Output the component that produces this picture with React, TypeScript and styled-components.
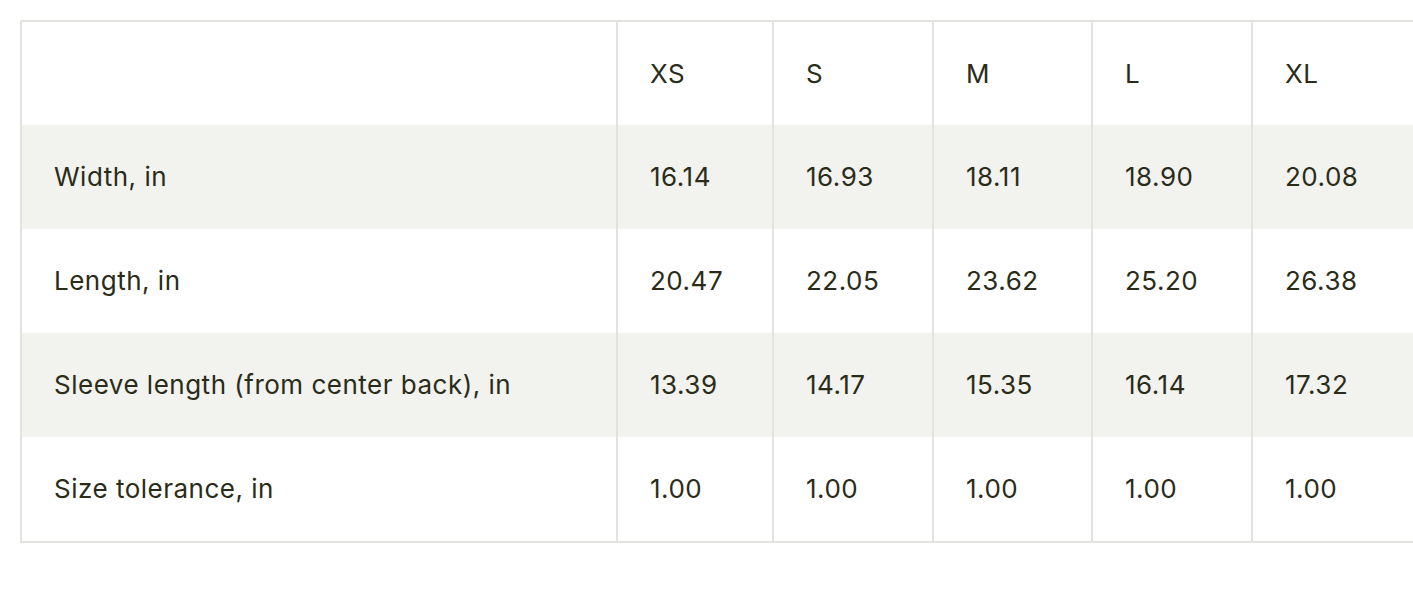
import styled, { createGlobalStyle } from 'styled-components'

const GlobalStyle = createGlobalStyle`
 html, body {
  margin: 0;
  padding: 0;
  background: #ffffff;
  overflow: hidden;
 }
`

const Wrapper = styled.div`
 padding: 20px 0 0 20px;
 width: 1500px;
 font-family: Inter, "Liberation Sans", sans-serif;
 color: #2a2c19;
`

const Table = styled.table`
 border-collapse: collapse;
 table-layout: fixed;
 width: 1430px;
 border: 2px solid #e2e2de;
`

const Col = styled.col<{ $w: number }>`
 width: ${p => p.$w}px;
`

const Row = styled.tr<{ $shaded?: boolean }>`
 background: ${p => (p.$shaded ? '#f2f2ee' : '#ffffff')};
 height: 104px;
 &:last-child {
  height: 105px;
 }
`

const Cell = styled.td`
 padding: 0 0 0 32px;
 font-size: 26px;
 line-height: 32px;
 font-weight: 400;
 letter-spacing: 0.5px;
 border-left: 2px solid #e2e2de;
 vertical-align: middle;
 white-space: nowrap;
 &:first-child {
  border-left: none;
 }
`

const widths = [596, 156, 160, 159, 160, 199]
const sizes = ['XS', 'S', 'M', 'L', 'XL']

const rows = [
 { label: 'Width, in', values: ['16.14', '16.93', '18.11', '18.90', '20.08'] },
 { label: 'Length, in', values: ['20.47', '22.05', '23.62', '25.20', '26.38'] },
 { label: 'Sleeve length (from center back), in', values: ['13.39', '14.17', '15.35', '16.14', '17.32'] },
 { label: 'Size tolerance, in', values: ['1.00', '1.00', '1.00', '1.00', '1.00'] },
]

const App = () => {
  return (
    <Wrapper>
      <GlobalStyle />
      <Table>
        <colgroup>
          {widths.map((w, i) => <Col key={i} $w={w} />)}
        </colgroup>
        <tbody>
          <Row>
            <Cell />
            {sizes.map(s => <Cell key={s}>{s}</Cell>)}
          </Row>
          {rows.map((r, i) => (
            <Row key={r.label} $shaded={i % 2 === 0}>
              <Cell>{r.label}</Cell>
              {r.values.map((v, j) => <Cell key={j}>{v}</Cell>)}
            </Row>
          ))}
        </tbody>
      </Table>
    </Wrapper>
  )
}

export default App
